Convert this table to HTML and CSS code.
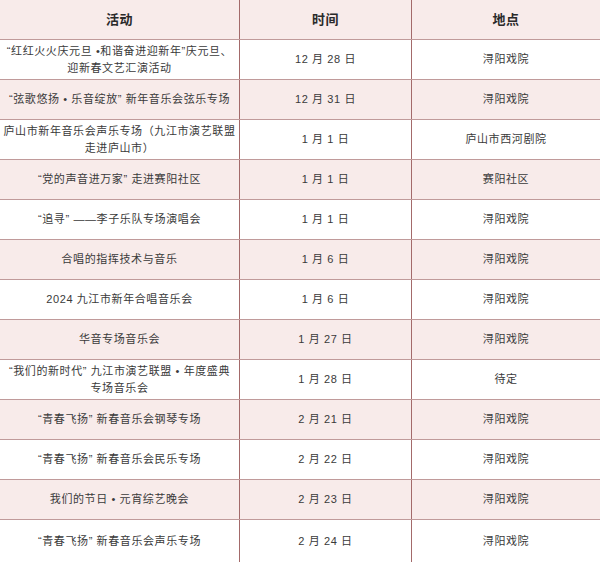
FILE: index.html
```html
<!DOCTYPE html>
<html lang="zh-CN">
<head>
<meta charset="utf-8">
<link rel="stylesheet" href="styles.css">
</head>
<body>
<div class="table">
  <div class="row head"><div class="cell c1">活动</div><div class="cell c2">时间</div><div class="cell c3">地点</div></div>
  <div class="row"><div class="cell c1">“红红火火庆元旦 •和谐奋进迎新年”庆元旦、<br>迎新春文艺汇演活动</div><div class="cell c2">12 月 28 日</div><div class="cell c3">浔阳戏院</div></div>
  <div class="row alt"><div class="cell c1">“弦歌悠扬 • 乐音绽放” 新年音乐会弦乐专场</div><div class="cell c2">12 月 31 日</div><div class="cell c3">浔阳戏院</div></div>
  <div class="row"><div class="cell c1">庐山市新年音乐会声乐专场（九江市演艺联盟<br>走进庐山市）</div><div class="cell c2">1 月 1 日</div><div class="cell c3">庐山市西河剧院</div></div>
  <div class="row alt"><div class="cell c1">“党的声音进万家” 走进赛阳社区</div><div class="cell c2">1 月 1 日</div><div class="cell c3">赛阳社区</div></div>
  <div class="row"><div class="cell c1">“追寻” ——李子乐队专场演唱会</div><div class="cell c2">1 月 1 日</div><div class="cell c3">浔阳戏院</div></div>
  <div class="row alt"><div class="cell c1">合唱的指挥技术与音乐</div><div class="cell c2">1 月 6 日</div><div class="cell c3">浔阳戏院</div></div>
  <div class="row"><div class="cell c1">2024 九江市新年合唱音乐会</div><div class="cell c2">1 月 6 日</div><div class="cell c3">浔阳戏院</div></div>
  <div class="row alt"><div class="cell c1">华音专场音乐会</div><div class="cell c2">1 月 27 日</div><div class="cell c3">浔阳戏院</div></div>
  <div class="row"><div class="cell c1">“我们的新时代” 九江市演艺联盟 • 年度盛典<br>专场音乐会</div><div class="cell c2">1 月 28 日</div><div class="cell c3">待定</div></div>
  <div class="row alt"><div class="cell c1">“青春飞扬” 新春音乐会钢琴专场</div><div class="cell c2">2 月 21 日</div><div class="cell c3">浔阳戏院</div></div>
  <div class="row"><div class="cell c1">“青春飞扬” 新春音乐会民乐专场</div><div class="cell c2">2 月 22 日</div><div class="cell c3">浔阳戏院</div></div>
  <div class="row alt"><div class="cell c1">我们的节日 • 元宵综艺晚会</div><div class="cell c2">2 月 23 日</div><div class="cell c3">浔阳戏院</div></div>
  <div class="row last"><div class="cell c1">“青春飞扬” 新春音乐会声乐专场</div><div class="cell c2">2 月 24 日</div><div class="cell c3">浔阳戏院</div></div>
</div>
</body>
</html>
```
FILE: styles.css
```css
html, body {
  margin: 0;
  padding: 0;
  background: #ffffff;
}
body {
  font-family: "Liberation Sans", "Noto Sans CJK SC", sans-serif;
  font-size: 11px;
  color: #3a3a3a;
  width: 600px;
}
.table {
  display: flex;
  flex-direction: column;
  width: 600px;
}
.row {
  display: grid;
  grid-template-columns: 240px 172px 188px;
  height: 40px;
  box-sizing: border-box;
  border-bottom: 1px solid #c09a9a;
  background: #ffffff;
}
.row.alt, .row.head {
  background: #f8ebea;
}
.row.last {
  height: 42px;
  border-bottom: none;
}
.cell {
  display: flex;
  align-items: center;
  justify-content: center;
  text-align: center;
  line-height: 17px;
  letter-spacing: 0.6px;
  padding: 0 2px;
}
.c1, .c2 {
  border-right: 1px solid #a36a6a;
}
.head .cell {
  font-weight: bold;
  font-size: 13px;
  color: #2a2a2a;
  letter-spacing: 0.5px;
}
```
